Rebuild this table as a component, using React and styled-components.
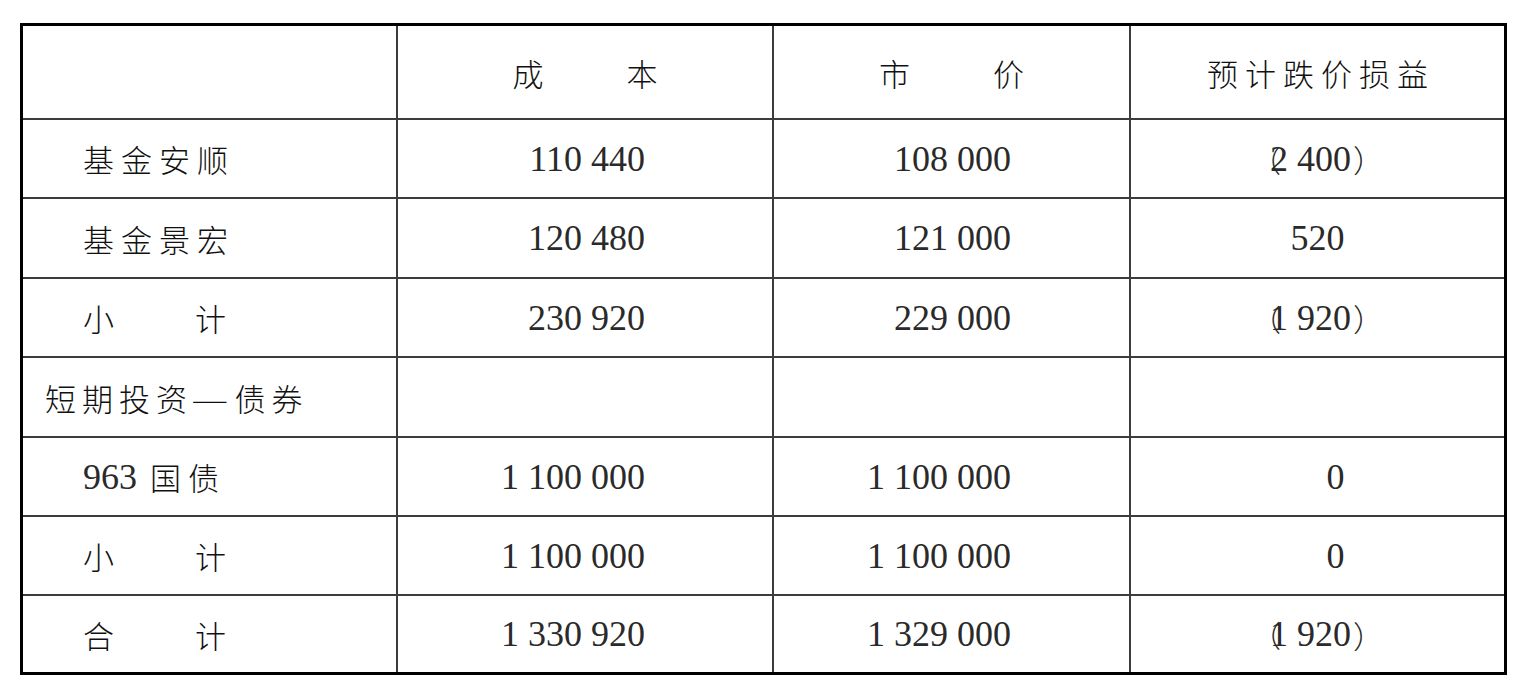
import React from "react";
import styled, { createGlobalStyle } from "styled-components";

const Global = createGlobalStyle`
  html, body { margin: 0; padding: 0; background: #fff; }
  body { font-family: "Noto Sans CJK SC", sans-serif; color: #111; }
`;

const Page = styled.div`
  padding: 23px 0 0 20px;
  width: 1534px;
  height: 691px;
  box-sizing: border-box;
`;

const Grid = styled.div`
  display: grid;
  width: 1487px;
  box-sizing: border-box;
  border: 3px solid #000;
  grid-template-columns: 375px 376px 357px 373px;
  grid-template-rows: 94px 79px 80px 79px 80px 79px 79px 76px;
`;

const Cell = styled.div`
  box-sizing: border-box;
  display: flex;
  align-items: center;
  justify-content: ${(p) => (p.$align === "right" ? "flex-end" : p.$align === "left" ? "flex-start" : "center")};
  padding-left: ${(p) => p.$pl || 0}px;
  padding-right: ${(p) => p.$pr || 0}px;
  border-right: ${(p) => (p.$lastCol ? "none" : "2px solid #3c3c3c")};
  border-bottom: ${(p) => (p.$lastRow ? "none" : "2px solid #3c3c3c")};
`;

const Han = styled.span`
  font-family: "Noto Sans CJK SC", sans-serif;
  font-weight: 300;
  font-size: 31px;
  letter-spacing: ${(p) => p.$ls ?? 7}px;
  line-height: 1;
  white-space: nowrap;
  display: inline-flex;
  align-items: center;
`;

const Dash = styled.span`
  display: inline-block;
  transform: scaleX(1.35);
  margin: 0 4px;
`;

const Spread = styled.span`
  display: inline-flex;
  gap: ${(p) => p.$gap}px;
  font-family: "Noto Sans CJK SC", sans-serif;
  font-weight: 300;
  font-size: 31px;
  line-height: 1;
`;

const Num = styled.span`
  font-family: "Liberation Serif", serif;
  font-size: 36px;
  line-height: 1;
  color: #2a2a2a;
  white-space: nowrap;
  display: inline-flex;
  align-items: center;
  margin-left: ${(p) => p.$shift || 0}px;
`;

const OpenParen = styled.span`
  font-family: "Noto Sans CJK SC", sans-serif;
  font-weight: 300;
  font-size: 30px;
  margin-right: -11px;
`;

const CloseParen = styled.span`
  font-family: "Noto Sans CJK SC", sans-serif;
  font-weight: 300;
  font-size: 31px;
  margin-left: 2px;
`;

const Label = styled.span`
  display: inline-flex;
  align-items: center;
  gap: 13px;
`;

const Neg = ({ children }) => (
  <Num>
    <OpenParen>（</OpenParen>
    {children}
    <CloseParen>）</CloseParen>
  </Num>
);

const rows = [
  { label: <Han>基金安顺</Han>, pl: 60, c: "110 440", m: "108 000", d: <Neg>2 400</Neg> },
  { label: <Han>基金景宏</Han>, pl: 60, c: "120 480", m: "121 000", d: <Num>520</Num> },
  { label: <Spread $gap={81}><span>小</span><span>计</span></Spread>, pl: 60, c: "230 920", m: "229 000", d: <Neg>1 920</Neg> },
  { label: <Han $ls={6}>短期投资<Dash>—</Dash>债券</Han>, pl: 22, c: "", m: "", d: null },
  { label: <Label><Num>963</Num><Han>国债</Han></Label>, pl: 60, c: "1 100 000", m: "1 100 000", d: <Num $shift={36}>0</Num> },
  { label: <Spread $gap={81}><span>小</span><span>计</span></Spread>, pl: 60, c: "1 100 000", m: "1 100 000", d: <Num $shift={36}>0</Num> },
  { label: <Spread $gap={81}><span>合</span><span>计</span></Spread>, pl: 60, c: "1 330 920", m: "1 329 000", d: <Neg>1 920</Neg> },
];

export default function App() {
  return (
    <>
      <Global />
      <Page>
        <Grid>
          <Cell />
          <Cell>
            <Spread $gap={83}><span>成</span><span>本</span></Spread>
          </Cell>
          <Cell>
            <Spread $gap={83}><span>市</span><span>价</span></Spread>
          </Cell>
          <Cell $lastCol>
            <Han style={{ marginRight: "-7px" }}>预计跌价损益</Han>
          </Cell>
          {rows.map((r, i) => {
            const last = i === rows.length - 1;
            return (
              <React.Fragment key={i}>
                <Cell $align="left" $pl={r.pl} $lastRow={last}>{r.label}</Cell>
                <Cell $align="right" $pr={127} $lastRow={last}>
                  {r.c && <Num>{r.c}</Num>}
                </Cell>
                <Cell $align="right" $pr={118} $lastRow={last}>
                  {r.m && <Num>{r.m}</Num>}
                </Cell>
                <Cell $lastCol $lastRow={last}>{r.d}</Cell>
              </React.Fragment>
            );
          })}
        </Grid>
      </Page>
    </>
  );
}
